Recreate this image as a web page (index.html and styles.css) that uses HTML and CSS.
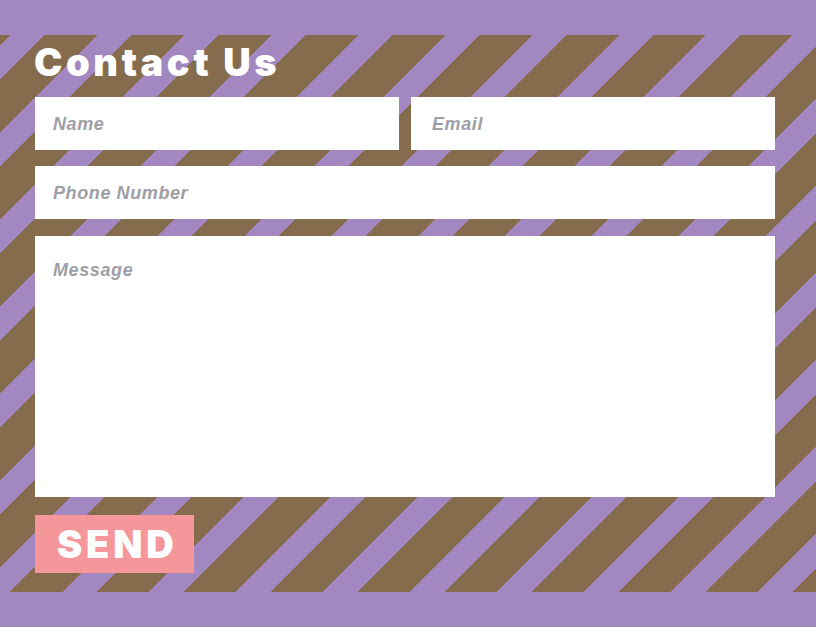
FILE: index.html
```html
<!DOCTYPE html>
<html lang="en">
<head>
<meta charset="utf-8">
<title>Contact Us</title>
<link rel="stylesheet" href="styles.css">
</head>
<body>
  <section class="stripes">
    <h1 class="title">Contact Us</h1>
    <form class="form">
      <div class="row">
        <input class="field" type="text" placeholder="Name">
        <input class="field field-email" type="text" placeholder="Email">
      </div>
      <input class="field field-phone" type="text" placeholder="Phone Number">
      <textarea class="field field-message" placeholder="Message"></textarea>
      <button class="send" type="button">SEND</button>
    </form>
  </section>
</body>
</html>
```

FILE: styles.css
```css
html, body {
  margin: 0;
  padding: 0;
}

body {
  background: #a287c0;
  width: 816px;
  height: 627px;
  overflow: hidden;
  font-family: "Liberation Sans", Arial, sans-serif;
}

.stripes {
  margin-top: 35px;
  height: 557px;
  box-sizing: border-box;
  padding: 0 41px 0 35px;
  background: repeating-linear-gradient(135deg,
    #846c4d 0 7.2px,
    #a287c0 7.2px 31.8px,
    #846c4d 31.8px 61.5px);
}

.title {
  margin: 0 0 8px -1px;
  font-family: "Inter", sans-serif;
  font-weight: 900;
  font-size: 38px;
  line-height: 54px;
  letter-spacing: 3.6px;
  color: #ffffff;
}

.form {
  display: flex;
  flex-direction: column;
  width: 740px;
}

.row {
  display: flex;
  gap: 12px;
  margin-bottom: 16px;
}

.field {
  box-sizing: border-box;
  height: 53px;
  border: none;
  outline: none;
  margin: 0;
  padding: 2px 18px 0;
  background: #ffffff;
  font-family: "Liberation Sans", Arial, sans-serif;
  font-style: italic;
  font-weight: bold;
  font-size: 18px;
  letter-spacing: 0.6px;
  color: #9e9ea6;
  border-radius: 0;
}

.row .field {
  width: 364px;
}

.field::placeholder {
  color: #9e9ea6;
  opacity: 1;
}

.field-email {
  padding-left: 21px;
}

.field-phone {
  width: 740px;
  margin-bottom: 17px;
}

.field-message {
  width: 740px;
  height: 261px;
  padding: 24px 18px;
  resize: none;
  display: block;
  margin-bottom: 18px;
  line-height: normal;
}

.send {
  align-self: flex-start;
  width: 159px;
  height: 58px;
  box-sizing: border-box;
  padding: 0 0 0 22px;
  text-align: left;
  border: none;
  border-radius: 0;
  background: #f4969a;
  color: #ffffff;
  font-family: "Inter", sans-serif;
  font-weight: 900;
  font-size: 38px;
  letter-spacing: 3.8px;
  line-height: 58px;
  cursor: pointer;
}
```
